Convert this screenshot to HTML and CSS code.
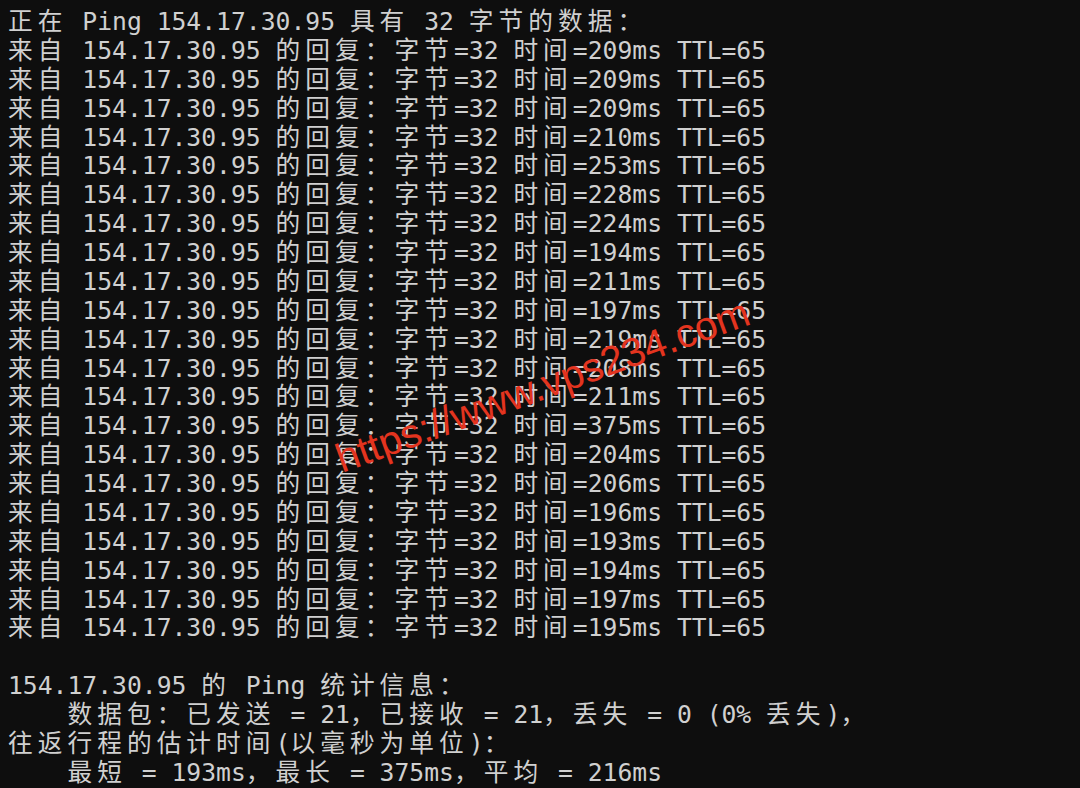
FILE: index.html
```html
<!DOCTYPE html>
<html lang="zh-CN">
<head>
<meta charset="utf-8">
<title>Ping</title>
<link rel="stylesheet" href="styles.css">
</head>
<body>
<main class="term">
<div class="ln"><span class="c">正在</span> Ping 154.17.30.95 <span class="c">具有</span> 32 <span class="c">字节的数据：</span></div>
<div class="ln"><span class="c">来自</span> 154.17.30.95 <span class="c">的回复：字节</span>=32 <span class="c">时间</span>=209ms TTL=65</div>
<div class="ln"><span class="c">来自</span> 154.17.30.95 <span class="c">的回复：字节</span>=32 <span class="c">时间</span>=209ms TTL=65</div>
<div class="ln"><span class="c">来自</span> 154.17.30.95 <span class="c">的回复：字节</span>=32 <span class="c">时间</span>=209ms TTL=65</div>
<div class="ln"><span class="c">来自</span> 154.17.30.95 <span class="c">的回复：字节</span>=32 <span class="c">时间</span>=210ms TTL=65</div>
<div class="ln"><span class="c">来自</span> 154.17.30.95 <span class="c">的回复：字节</span>=32 <span class="c">时间</span>=253ms TTL=65</div>
<div class="ln"><span class="c">来自</span> 154.17.30.95 <span class="c">的回复：字节</span>=32 <span class="c">时间</span>=228ms TTL=65</div>
<div class="ln"><span class="c">来自</span> 154.17.30.95 <span class="c">的回复：字节</span>=32 <span class="c">时间</span>=224ms TTL=65</div>
<div class="ln"><span class="c">来自</span> 154.17.30.95 <span class="c">的回复：字节</span>=32 <span class="c">时间</span>=194ms TTL=65</div>
<div class="ln"><span class="c">来自</span> 154.17.30.95 <span class="c">的回复：字节</span>=32 <span class="c">时间</span>=211ms TTL=65</div>
<div class="ln"><span class="c">来自</span> 154.17.30.95 <span class="c">的回复：字节</span>=32 <span class="c">时间</span>=197ms TTL=65</div>
<div class="ln"><span class="c">来自</span> 154.17.30.95 <span class="c">的回复：字节</span>=32 <span class="c">时间</span>=219ms TTL=65</div>
<div class="ln"><span class="c">来自</span> 154.17.30.95 <span class="c">的回复：字节</span>=32 <span class="c">时间</span>=208ms TTL=65</div>
<div class="ln"><span class="c">来自</span> 154.17.30.95 <span class="c">的回复：字节</span>=32 <span class="c">时间</span>=211ms TTL=65</div>
<div class="ln"><span class="c">来自</span> 154.17.30.95 <span class="c">的回复：字节</span>=32 <span class="c">时间</span>=375ms TTL=65</div>
<div class="ln"><span class="c">来自</span> 154.17.30.95 <span class="c">的回复：字节</span>=32 <span class="c">时间</span>=204ms TTL=65</div>
<div class="ln"><span class="c">来自</span> 154.17.30.95 <span class="c">的回复：字节</span>=32 <span class="c">时间</span>=206ms TTL=65</div>
<div class="ln"><span class="c">来自</span> 154.17.30.95 <span class="c">的回复：字节</span>=32 <span class="c">时间</span>=196ms TTL=65</div>
<div class="ln"><span class="c">来自</span> 154.17.30.95 <span class="c">的回复：字节</span>=32 <span class="c">时间</span>=193ms TTL=65</div>
<div class="ln"><span class="c">来自</span> 154.17.30.95 <span class="c">的回复：字节</span>=32 <span class="c">时间</span>=194ms TTL=65</div>
<div class="ln"><span class="c">来自</span> 154.17.30.95 <span class="c">的回复：字节</span>=32 <span class="c">时间</span>=197ms TTL=65</div>
<div class="ln"><span class="c">来自</span> 154.17.30.95 <span class="c">的回复：字节</span>=32 <span class="c">时间</span>=195ms TTL=65</div>
<div class="ln"> </div>
<div class="ln">154.17.30.95 <span class="c">的</span> Ping <span class="c">统计信息：</span></div>
<div class="ln">    <span class="c">数据包：已发送</span> = 21<span class="c">，已接收</span> = 21<span class="c">，丢失</span> = 0 (0% <span class="c">丢失</span>)<span class="c">，</span></div>
<div class="ln"><span class="c">往返行程的估计时间</span>(<span class="c">以毫秒为单位</span>)<span class="c">：</span></div>
<div class="ln">    <span class="c">最短</span> = 193ms<span class="c">，最长</span> = 375ms<span class="c">，平均</span> = 216ms</div>
<div class="mark">https://www.vps234.com</div>
</main>
</body>
</html>
```

FILE: styles.css
```css
html, body {
  margin: 0;
  padding: 0;
  background: #0e0e0e;
}
body {
  width: 1080px;
  height: 788px;
  overflow: hidden;
}
.term {
  position: relative;
  padding: 5px 0 0 8px;
  color: #d0d0d0;
  font-family: "DejaVu Sans Mono", "Liberation Mono", monospace;
  font-size: 24.7px;
  display: grid;
  grid-auto-rows: 28.88px;
}
.ln {
  white-space: pre;
  line-height: 28.88px;
  height: 28.88px;
}
.c {
  font-family: "Noto Sans CJK SC", sans-serif;
  font-size: 24.7px;
  letter-spacing: 5.04px;
}
.mark {
  position: absolute;
  left: 342px;
  top: 439px;
  font-family: "Liberation Sans", Arial, sans-serif;
  font-size: 40.5px;
  line-height: 40px;
  color: #e3341f;
  white-space: nowrap;
  transform-origin: 0 34px;
  transform: rotate(-20deg);
}
```
